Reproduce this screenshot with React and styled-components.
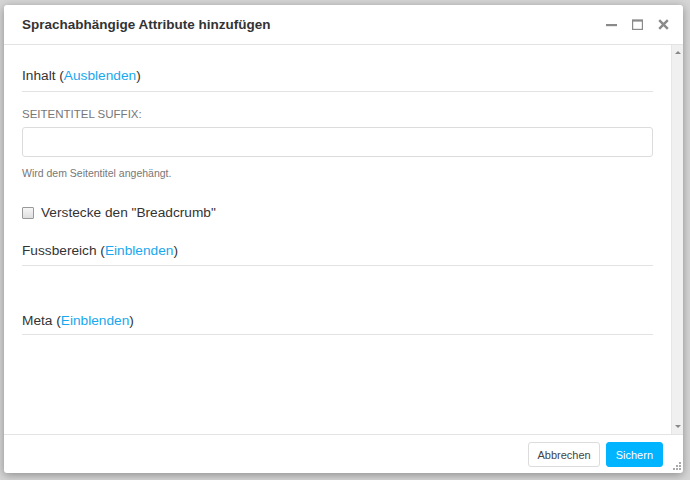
import React from 'react';
import styled, { createGlobalStyle } from 'styled-components';

const GlobalStyle = createGlobalStyle`
  html, body {
    margin: 0;
    padding: 0;
    background: #d6d6d6;
    font-family: "Liberation Sans", Arial, sans-serif;
  }
`;

const Page = styled.div`
  width: 690px;
  height: 480px;
  box-sizing: border-box;
  padding: 5px 7px 7px 4px;
  overflow: hidden;
`;

const Dialog = styled.div`
  width: 679px;
  height: 468px;
  background: #fff;
  border-radius: 3px;
  box-shadow: 0 2px 10px rgba(0, 0, 0, 0.35);
  display: flex;
  flex-direction: column;
  overflow: hidden;
  position: relative;
`;

const Header = styled.div`
  height: 39px;
  flex: none;
  display: flex;
  align-items: center;
  padding: 0 14px 0 18px;
  border-bottom: 1px solid #e3e3e3;
`;

const Title = styled.h1`
  flex: 1;
  margin: 0;
  font-size: 13.5px;
  font-weight: bold;
  color: #333;
`;

const Tools = styled.div`
  display: flex;
  align-items: center;
  gap: 15px;
  color: #8a8a8a;
`;

const ToolIcon = styled.svg`
  width: 11px;
  height: 11px;
  display: block;
`;

const Body = styled.div`
  flex: 1;
  display: flex;
  min-height: 0;
`;

const Content = styled.div`
  flex: 1;
  padding: 0 18px;
`;

const Scrollbar = styled.div`
  width: 11px;
  background: #f0f0f0;
  border-left: 1px solid #e6e6e6;
  display: flex;
  flex-direction: column;
  justify-content: space-between;
  align-items: center;
  padding: 6px 0 6px;
`;

const Arrow = styled.div`
  width: 0;
  height: 0;
  border-left: 3px solid transparent;
  border-right: 3px solid transparent;
  ${(p) => (p.$down ? 'border-top: 3px solid #888;' : 'border-bottom: 3px solid #888;')}
`;

const SectionHeader = styled.div`
  margin-top: ${(p) => p.$top}px;
  font-size: 13.7px;
  line-height: 20px;
  color: #333;
  padding-bottom: ${(p) => p.$pad ?? 5}px;
  border-bottom: 1px solid #e3e3e3;
`;

const Link = styled.span`
  color: #17a8ee;
`;

const FieldLabel = styled.div`
  margin-top: 16px;
  font-size: 11.5px;
  line-height: 13px;
  color: #777;
  text-transform: uppercase;
`;

const Input = styled.input`
  display: block;
  width: 100%;
  height: 30px;
  box-sizing: border-box;
  margin-top: 6px;
  border: 1px solid #dcdcdc;
  border-radius: 3px;
  padding: 0 8px;
  font-family: inherit;
  font-size: 13px;
  outline: none;
`;

const Help = styled.div`
  margin-top: 9px;
  font-size: 10.5px;
  line-height: 14px;
  color: #777;
`;

const CheckRow = styled.label`
  margin-top: 23px;
  display: flex;
  align-items: center;
  gap: 7px;
  font-size: 13.7px;
  line-height: 20px;
  color: #333;
`;

const Box = styled.span`
  width: 10px;
  height: 10px;
  border: 1px solid #999;
  background: linear-gradient(#f6f6f6, #dedede);
  border-radius: 1px;
`;

const Footer = styled.div`
  height: 39px;
  flex: none;
  box-sizing: border-box;
  border-top: 1px solid #e3e3e3;
  display: flex;
  justify-content: flex-end;
  align-items: flex-start;
  gap: 6px;
  padding: 7px 20px 0 0;
`;

const Button = styled.button`
  height: 25px;
  padding: 0 ${(p) => (p.$primary ? 9 : 8)}px;
  border-radius: 3px;
  font-family: inherit;
  font-size: 11px;
  border: 1px solid ${(p) => (p.$primary ? '#00b4ff' : '#dcdcdc')};
  background: ${(p) => (p.$primary ? '#00b4ff' : '#fff')};
  color: ${(p) => (p.$primary ? '#fff' : '#444')};
`;

const Grip = styled.svg`
  position: absolute;
  right: 2px;
  bottom: 3px;
  width: 8px;
  height: 8px;
`;

export default function App() {
  return (
    <>
      <GlobalStyle />
      <Page>
        <Dialog>
          <Header>
            <Title>Sprachabhängige Attribute hinzufügen</Title>
            <Tools>
              <ToolIcon viewBox="0 0 11 11">
                <rect x="0" y="5" width="11" height="2.2" fill="currentColor" />
              </ToolIcon>
              <ToolIcon viewBox="0 0 11 11">
                <rect x="0.6" y="1.2" width="9.8" height="9.2" fill="none" stroke="currentColor" strokeWidth="1.2" />
                <rect x="0" y="0.6" width="11" height="2" fill="currentColor" />
              </ToolIcon>
              <ToolIcon viewBox="0 0 11 11">
                <path d="M1.2 1.2 L9.8 9.8 M9.8 1.2 L1.2 9.8" stroke="currentColor" strokeWidth="2.4" />
              </ToolIcon>
            </Tools>
          </Header>
          <Body>
            <Content>
              <SectionHeader $top={21}>
                Inhalt (<Link>Ausblenden</Link>)
              </SectionHeader>
              <FieldLabel>Seitentitel Suffix:</FieldLabel>
              <Input type="text" />
              <Help>Wird dem Seitentitel angehängt.</Help>
              <CheckRow>
                <Box />
                Verstecke den "Breadcrumb"
              </CheckRow>
              <SectionHeader $top={18} $pad={4}>
                Fussbereich (<Link>Einblenden</Link>)
              </SectionHeader>
              <SectionHeader $top={45} $pad={3}>
                Meta (<Link>Einblenden</Link>)
              </SectionHeader>
            </Content>
            <Scrollbar>
              <Arrow />
              <Arrow $down />
            </Scrollbar>
          </Body>
          <Footer>
            <Button>Abbrechen</Button>
            <Button $primary>Sichern</Button>
          </Footer>
          <Grip viewBox="0 0 8 8">
            <rect x="6" y="0" width="2" height="2" fill="#aaa" />
            <rect x="3" y="3" width="2" height="2" fill="#aaa" />
            <rect x="6" y="3" width="2" height="2" fill="#aaa" />
            <rect x="0" y="6" width="2" height="2" fill="#aaa" />
            <rect x="3" y="6" width="2" height="2" fill="#aaa" />
            <rect x="6" y="6" width="2" height="2" fill="#aaa" />
          </Grip>
        </Dialog>
      </Page>
    </>
  );
}
